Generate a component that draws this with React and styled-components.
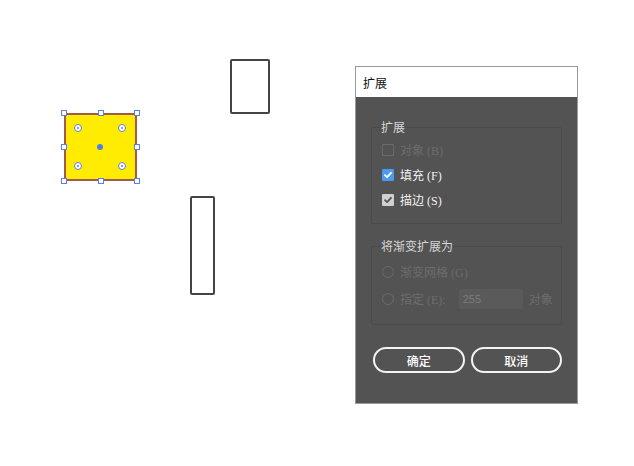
import React from 'react';
import styled, { createGlobalStyle, css } from 'styled-components';

const GlobalStyle = createGlobalStyle`
  html, body {
    margin: 0;
    padding: 0;
    background: #ffffff;
  }
  body {
    font-family: "Noto Sans CJK SC", "Liberation Sans", sans-serif;
  }
`;

const Stage = styled.div`
  position: relative;
  width: 634px;
  height: 466px;
  overflow: hidden;
  background: #ffffff;
`;

/* canvas objects */
const Shape = styled.div`
  position: absolute;
  box-sizing: border-box;
  border: 2px solid #444444;
  border-radius: 2px;
  background: #ffffff;
`;

const Selected = styled.div`
  position: absolute;
  left: 64px;
  top: 113px;
  width: 73px;
  height: 68px;
  box-sizing: border-box;
  background: #ffec00;
  border: 2px solid #a35a4a;
`;

const Handle = styled.span`
  position: absolute;
  width: 6px;
  height: 6px;
  box-sizing: border-box;
  background: #ffffff;
  border: 1px solid #5b7fe0;
  transform: translate(-50%, -50%);
`;

const Anchor = styled.span`
  position: absolute;
  width: 8px;
  height: 8px;
  box-sizing: border-box;
  border-radius: 50%;
  border: 1.5px solid #5b7fe0;
  background: #ffffff;
  transform: translate(-50%, -50%);

  &::after {
    content: '';
    position: absolute;
    left: 1.5px;
    top: 1.5px;
    width: 2px;
    height: 2px;
    border-radius: 50%;
    background: #5b7fe0;
  }

  ${p => p.solid && css`
    width: 6px;
    height: 6px;
    border: none;
    background: #4d7fe8;
    &::after { display: none; }
  `}
`;

/* dialog */
const Dialog = styled.div`
  position: absolute;
  left: 355px;
  top: 66px;
  width: 223px;
  height: 338px;
  box-sizing: border-box;
  border: 1px solid #9a9a9a;
  display: flex;
  flex-direction: column;
  background: #535353;
`;

const TitleBar = styled.div`
  height: 30px;
  flex: none;
  background: #ffffff;
  display: flex;
  align-items: center;
  padding-left: 7px;
  font-size: 12px;
  color: #111111;
`;

const Body = styled.div`
  flex: 1;
  display: flex;
  flex-direction: column;
  padding: 23px 15px 0 15px;
`;

const Group = styled.fieldset`
  margin: 0;
  padding: ${p => p.pad || '3px 0 11px 10px'};
  border: 1px solid #4b4b4b;
  border-radius: 2px;
  min-width: 0;
  display: flex;
  flex-direction: column;
  margin-bottom: ${p => p.gap || 0}px;
`;

const Legend = styled.legend`
  padding: 0;
  margin-left: -1px;
  font-size: 12px;
  line-height: 14px;
  color: #d6d6d6;
`;

const Row = styled.div`
  display: flex;
  align-items: center;
  height: ${p => p.h || 25}px;
  font-family: "Liberation Serif", "Noto Sans CJK SC", serif;
  font-size: 12px;
  color: ${p => (p.disabled ? '#6c6c6c' : '#f2f2f2')};
  gap: 6px;
`;

const Box = styled.span`
  width: 12px;
  height: 12px;
  box-sizing: border-box;
  border-radius: 1px;
  display: flex;
  align-items: center;
  justify-content: center;
  flex: none;
  ${p => p.kind === 'off' && css`
    border: 1px solid #6a6a6a;
  `}
  ${p => p.kind === 'blue' && css`
    background: #4b9cf0;
  `}
  ${p => p.kind === 'gray' && css`
    background: #d0d0d0;
  `}
`;

const Radio = styled.span`
  width: 12px;
  height: 12px;
  box-sizing: border-box;
  border-radius: 50%;
  border: 1px solid #6a6a6a;
  flex: none;
`;

const NumberField = styled.span`
  width: 64px;
  height: 20px;
  box-sizing: border-box;
  background: #5a5a5a;
  border-radius: 2px;
  color: #7a7a7a;
  display: flex;
  align-items: center;
  padding-left: 4px;
  font-family: "Liberation Sans", sans-serif;
  font-size: 11px;
  margin-left: ${p => p.offset || 0}px;
`;

const Buttons = styled.div`
  display: flex;
  gap: 6px;
  margin-top: 22px;
  padding-left: 2px;
`;

const Pill = styled.button`
  width: 92px;
  height: 26px;
  box-sizing: border-box;
  border: 2px solid #f4f4f4;
  border-radius: 13px;
  background: transparent;
  color: #ffffff;
  font-family: "Noto Sans CJK SC", sans-serif;
  font-size: 12px;
  font-weight: 500;
  padding: 0;
`;

const Check = ({ color }) => (
  <svg width="10" height="10" viewBox="0 0 10 10">
    <path d="M2 5.2 L4.1 7.2 L8 2.8" fill="none" stroke={color} strokeWidth="1.8" strokeLinecap="round" strokeLinejoin="round" />
  </svg>
);

export default function App() {
  const handles = [
    [64, 113], [101, 113], [137, 113],
    [64, 147], [137, 147],
    [64, 181], [101, 181], [137, 181],
  ];
  const anchors = [[78, 128], [122, 128], [78, 166], [122, 166]];

  return (
    <>
      <GlobalStyle />
      <Stage>
        <Shape style={{ left: 230, top: 59, width: 40, height: 55 }} />
        <Shape style={{ left: 190, top: 196, width: 25, height: 99 }} />
        <Selected />
        {anchors.map(([x, y]) => (
          <Anchor key={`a${x}-${y}`} style={{ left: x, top: y }} />
        ))}
        <Anchor solid style={{ left: 100, top: 147 }} />
        {handles.map(([x, y]) => (
          <Handle key={`h${x}-${y}`} style={{ left: x, top: y }} />
        ))}

        <Dialog>
          <TitleBar>扩展</TitleBar>
          <Body>
            <Group gap={15}>
              <Legend>扩展</Legend>
              <Row disabled>
                <Box kind="off" />
                对象 (B)
              </Row>
              <Row>
                <Box kind="blue"><Check color="#ffffff" /></Box>
                填充 (F)
              </Row>
              <Row>
                <Box kind="gray"><Check color="#555555" /></Box>
                描边 (S)
              </Row>
            </Group>
            <Group pad="6px 0 10px 10px">
              <Legend>将渐变扩展为</Legend>
              <Row disabled>
                <Radio />
                渐变网格 (G)
              </Row>
              <Row disabled h={30}>
                <Radio />
                指定 (E):
                <NumberField offset={7}>255</NumberField>
                对象
              </Row>
            </Group>
            <Buttons>
              <Pill>确定</Pill>
              <Pill>取消</Pill>
            </Buttons>
          </Body>
        </Dialog>
      </Stage>
    </>
  );
}
